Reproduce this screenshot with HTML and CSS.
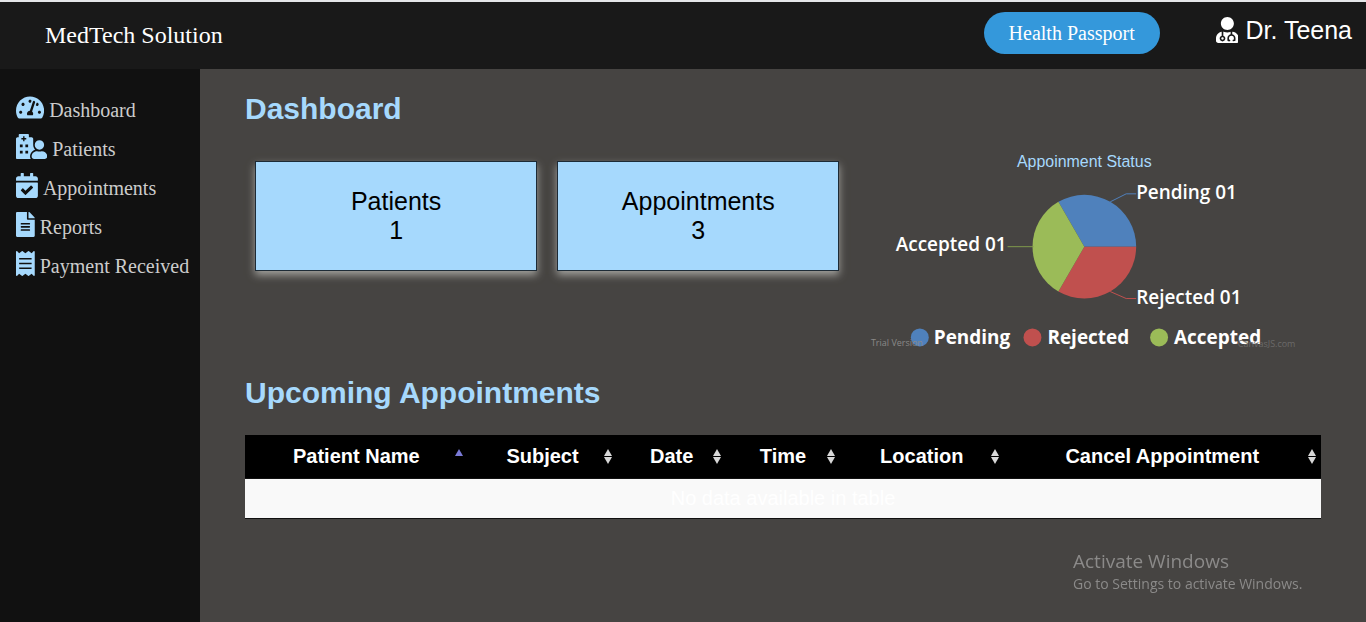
FILE: index.html
```html
<!DOCTYPE html>
<html lang="en">
<head>
<meta charset="utf-8">
<title>MedTech Solution</title>
<link rel="stylesheet" href="styles.css">
</head>
<body>
<header class="topbar">
  <div class="brand">MedTech Solution</div>
  <button class="passport" type="button">Health Passport</button>
  <a class="user" href="#">
    <svg class="user-icon" viewBox="0 0 448 512" aria-hidden="true"><path d="M224 256c70.700 0 128-57.300 128-128S294.700 0 224 0 96 57.300 96 128s57.300 128 128 128zM104 424c0 13.300 10.700 24 24 24s24-10.700 24-24-10.700-24-24-24-24 10.700-24 24zm216-135.400v49c36.500 7.400 64 39.800 64 78.400v41.700c0 7.600-5.400 14.200-12.900 15.700l-32.200 6.400c-4.300.9-8.500-1.900-9.400-6.300l-3.100-15.700c-.9-4.300 1.900-8.600 6.300-9.400l19.300-3.900V416c0-62.800-96-65.100-96 1.900v26.700l19.300 3.900c4.300.9 7.100 5.100 6.300 9.400l-3.100 15.700c-.9 4.300-5.100 7.100-9.400 6.300l-31.200-4.200c-7.900-1.100-13.800-7.800-13.800-15.900V416c0-38.600 27.500-70.900 64-78.400v-45.200c-2.200.7-4.400 1.100-6.600 1.900-18 6.300-37.300 9.800-57.400 9.800s-39.400-3.500-57.400-9.800c-7.400-2.600-14.900-4.200-22.600-5.200v81.600c23.100 6.900 40 28.100 40 53.400 0 30.900-25.100 56-56 56s-56-25.100-56-56c0-25.300 16.900-46.500 40-53.400v-80.400C48.500 301 0 355.800 0 422.400v44.800C0 491.900 20.100 512 44.800 512h358.400c24.700 0 44.800-20.100 44.800-44.800v-44.800c0-72-56.800-130.300-128-133.800z"/></svg>
    <span>Dr. Teena</span>
  </a>
</header>
<div class="layout">
  <nav class="sidebar">
    <a class="nav-link" href="#">
      <svg class="nav-icon" viewBox="0 0 576 512" aria-hidden="true"><path d="M288 32C128.940 32 0 160.940 0 320c0 52.800 14.250 102.260 39.060 144.800 5.610 9.620 16.300 15.200 27.440 15.200h443c11.140 0 21.830-5.580 27.440-15.200C561.750 422.260 576 372.800 576 320c0-159.060-128.940-288-288-288zm0 64c14.710 0 26.580 10.130 30.320 23.650-1.110 2.260-2.640 4.230-3.450 6.670l-9.220 27.670c-5.130 3.490-10.970 6.010-17.640 6.010-17.670 0-32-14.330-32-32S270.330 96 288 96zM96 384c-17.670 0-32-14.330-32-32s14.330-32 32-32 32 14.330 32 32-14.330 32-32 32zm48-160c-17.670 0-32-14.330-32-32s14.330-32 32-32 32 14.330 32 32-14.330 32-32 32zm246.770-72.410l-61.330 184C343.130 347.330 352 364.540 352 384c0 11.720-3.380 22.550-8.880 32H232.880c-5.500-9.450-8.880-20.280-8.880-32 0-33.940 26.500-61.430 59.900-63.590l61.340-184.010c4.170-12.560 17.730-19.450 30.360-15.170 12.570 4.190 19.350 17.790 15.170 30.360zm14.660 57.200l15.520-46.550c3.470-1.290 7.130-2.230 11.050-2.230 17.670 0 32 14.330 32 32s-14.330 32-32 32c-11.380-.01-20.890-6.280-26.570-15.220zM480 384c-17.670 0-32-14.330-32-32s14.330-32 32-32 32 14.330 32 32-14.330 32-32 32z"/></svg>
      <span>Dashboard</span>
    </a>
    <a class="nav-link" href="#">
      <svg class="nav-icon" viewBox="0 0 640 512" aria-hidden="true"><path fill-rule="evenodd" d="M480 320a96 96 0 1 0-96-96 96 96 0 0 0 96 96zm48 32c-31 11-65 11-96 0-66.200 0-112 48-112 108.700 0 28.300 23.200 51.300 52 51.300h216c28.800 0 52-23 52-51.300C640 400 594 352 528 352zM76 0h168c11 0 20 9 20 20v44h56c17 0 32 15 32 32v128c0 37 16 71 42 94-49 18-106 72-106 142 0 20 6 38 16 52H16c-9 0-16-7-16-16V96c0-17 15-32 32-32h24V20c0-11 9-20 20-20zm70 48v36h-36v28h36v36h28v-36h36V84h-36V48zM80 216v56h56v-56zm112 0v56h56v-56zM80 344v56h56v-56zm112 0v56h56v-56z"/></svg>
      <span>Patients</span>
    </a>
    <a class="nav-link" href="#">
      <svg class="nav-icon" viewBox="0 0 448 512" aria-hidden="true"><path d="M436 160H12c-6.627 0-12-5.373-12-12v-36c0-26.510 21.490-48 48-48h48V12c0-6.627 5.373-12 12-12h40c6.627 0 12 5.373 12 12v52h128V12c0-6.627 5.373-12 12-12h40c6.627 0 12 5.373 12 12v52h48c26.510 0 48 21.490 48 48v36c0 6.627-5.373 12-12 12zM12 192h424c6.627 0 12 5.373 12 12v260c0 26.510-21.490 48-48 48H48c-26.510 0-48-21.490-48-48V204c0-6.627 5.373-12 12-12zm333.296 95.947l-28.169-28.398c-4.667-4.705-12.265-4.736-16.970-.068L194.120 364.665l-45.980-46.352c-4.667-4.705-12.266-4.736-16.971-.068l-28.397 28.170c-4.705 4.667-4.736 12.265-.068 16.970l82.601 83.269c4.667 4.705 12.265 4.736 16.970.068l142.953-141.805c4.705-4.667 4.736-12.265.068-16.970z"/></svg>
      <span>Appointments</span>
    </a>
    <a class="nav-link" href="#">
      <svg class="nav-icon" viewBox="0 0 384 512" aria-hidden="true"><path d="M224 136V0H24C10.700 0 0 10.700 0 24v464c0 13.300 10.700 24 24 24h336c13.300 0 24-10.700 24-24V160H248c-13.200 0-24-10.800-24-24zm64 236c0 6.600-5.400 12-12 12H108c-6.600 0-12-5.400-12-12v-8c0-6.600 5.400-12 12-12h168c6.600 0 12 5.400 12 12v8zm0-64c0 6.600-5.400 12-12 12H108c-6.600 0-12-5.400-12-12v-8c0-6.600 5.400-12 12-12h168c6.600 0 12 5.400 12 12v8zm0-72v8c0 6.600-5.400 12-12 12H108c-6.600 0-12-5.400-12-12v-8c0-6.600 5.400-12 12-12h168c6.600 0 12 5.400 12 12zm96-114.100v6.100H256V0h6.100c6.400 0 12.500 2.500 17 7l97.900 98c4.500 4.500 7 10.600 7 16.900z"/></svg>
      <span>Reports</span>
    </a>
    <a class="nav-link" href="#">
      <svg class="nav-icon" viewBox="0 0 384 512" aria-hidden="true"><path d="M358.400 3.200L320 48 265.600 3.200a15.900 15.900 0 0 0-19.200 0L192 48 137.600 3.200a15.900 15.900 0 0 0-19.200 0L64 48 25.600 3.200C15-4.700 0 2.800 0 16v480c0 13.200 15 20.700 25.600 12.800L64 464l54.400 44.800a15.900 15.900 0 0 0 19.200 0L192 464l54.400 44.800a15.900 15.900 0 0 0 19.200 0L320 464l38.400 44.800c10.500 7.900 25.600.4 25.600-12.800V16c0-13.200-15-20.700-25.600-12.800zM320 360c0 4.400-3.600 8-8 8H72c-4.400 0-8-3.600-8-8v-16c0-4.400 3.600-8 8-8h240c4.400 0 8 3.600 8 8v16zm0-96c0 4.400-3.600 8-8 8H72c-4.400 0-8-3.600-8-8v-16c0-4.400 3.600-8 8-8h240c4.400 0 8 3.600 8 8v16zm0-96c0 4.400-3.600 8-8 8H72c-4.400 0-8-3.600-8-8v-16c0-4.400 3.600-8 8-8h240c4.400 0 8 3.600 8 8v16z"/></svg>
      <span>Payment Received</span>
    </a>
  </nav>
  <main class="content">
    <h1 class="heading">Dashboard</h1>
    <section class="summary">
      <div class="card"><span>Patients</span><span>1</span></div>
      <div class="card"><span>Appointments</span><span>3</span></div>
      <svg class="chart" viewBox="0 0 473 212" role="img" aria-label="Appointment status chart">
        <text class="chart-title" x="236" y="27" text-anchor="middle">Appoinment Status</text>
        <path class="pending" d="M236 107H288A52 52 0 0 0 210 62z"/>
        <path class="rejected" d="M236 107H288A52 52 0 0 1 210 152z"/>
        <path class="accepted" d="M236 107L210 62A52 52 0 0 0 210 152z"/>
        <path class="lead lead-pending" d="M262 62L278 54H288"/>
        <path class="lead lead-rejected" d="M262 152L278 159H288"/>
        <path class="lead lead-accepted" d="M159 107H185"/>
        <text class="label" x="288" y="59">Pending 01</text>
        <text class="label" x="288" y="164">Rejected 01</text>
        <text class="label" x="158" y="111" text-anchor="end">Accepted 01</text>
        <circle class="pending" cx="71" cy="198" r="9"/>
        <text class="label legend" x="85" y="205">Pending</text>
        <circle class="rejected" cx="184" cy="198" r="9"/>
        <text class="label legend" x="199" y="205">Rejected</text>
        <circle class="accepted" cx="311" cy="198" r="9"/>
        <text class="label legend" x="326" y="205">Accepted</text>
        <text class="credit" x="22" y="207">Trial Version</text>
        <text class="credit credit-dim" x="390" y="208">CanvasJS.com</text>
      </svg>
    </section>
    <h2 class="heading">Upcoming Appointments</h2>
    <table class="appointments">
      <colgroup><col class="col-name"><col class="col-subject"><col class="col-date"><col class="col-time"><col class="col-location"><col class="col-cancel"></colgroup>
      <thead>
        <tr>
          <th class="sorted">Patient Name</th>
          <th>Subject</th>
          <th>Date</th>
          <th>Time</th>
          <th>Location</th>
          <th>Cancel Appointment</th>
        </tr>
      </thead>
      <tbody>
        <tr><td colspan="6">No data available in table</td></tr>
      </tbody>
    </table>
  </main>
</div>
<aside class="activation">
  <div class="activation-title">Activate Windows</div>
  <div>Go to Settings to activate Windows.</div>
</aside>
</body>
</html>
```

FILE: styles.css
```css
* { box-sizing: border-box; }

body {
  display: flex;
  flex-direction: column;
  min-height: 100vh;
  margin: 0;
  background: #464442;
  font-family: "Liberation Sans", Arial, sans-serif;
}

a { color: inherit; text-decoration: none; }

.topbar {
  display: flex;
  align-items: flex-start;
  padding: 10px 14px 11px 45px;
  border-top: 2px solid #e4e6e8;
  background: #191919;
  color: #fff;
}

.brand {
  flex: 1;
  font: 24px/46px "Liberation Serif", "Times New Roman", serif;
}

.passport {
  height: 42px;
  margin-right: 56px;
  padding: 0 25px;
  border: 0;
  border-radius: 21px;
  background: #3498db;
  color: #fff;
  font: 20px/42px "Liberation Serif", "Times New Roman", serif;
}

.user {
  display: flex;
  align-items: center;
  gap: 7px;
  font-size: 25px;
  line-height: 36px;
}

.user-icon { height: 26px; fill: #fff; }

.layout { display: flex; flex: 1; }

.sidebar {
  display: flex;
  flex: 0 0 200px;
  flex-direction: column;
  gap: 8px;
  padding: 26px 0 26px 16px;
  background: #111;
  color: #ccc;
  font: 20px/31px "Liberation Serif", "Times New Roman", serif;
}

.nav-link {
  display: flex;
  align-items: flex-start;
  gap: 5px;
  white-space: nowrap;
}

.nav-icon { height: 25px; fill: #a6d9fd; }

.content { flex: 1; min-width: 0; padding: 22px 45px; }

.heading {
  margin: 0;
  color: #a6d9fd;
  font-size: 30px;
  line-height: 35px;
}

.summary {
  display: flex;
  align-items: flex-start;
  gap: 20px;
  padding: 14px 0 24px 10px;
}

.card {
  display: flex;
  flex: 281;
  flex-direction: column;
  margin-top: 21px;
  padding: 25px 0;
  border: 1px solid #1d2b36;
  background: #a6d9fd;
  box-shadow: 0 4px 8px rgba(255, 255, 250, 0.5);
  color: #000;
  font-size: 25px;
  line-height: 29px;
  text-align: center;
}

.chart { flex: 473; min-width: 0; margin-left: -10px; overflow: visible; }
.chart-title { fill: #a6d9fd; font-size: 16px; }
.pending { fill: #4f81bc; }
.rejected { fill: #c0504e; }
.accepted { fill: #9bbb58; }
.lead { fill: none; stroke-width: 1; }
.lead-pending { stroke: #4f81bc; }
.lead-rejected { stroke: #c0504e; }
.lead-accepted { stroke: #7f9a4c; }

.label {
  fill: #fff;
  font: 600 19px "Open Sans", "Noto Sans", sans-serif;
}

.legend { font-weight: 700; }

.credit {
  fill: #8a8988;
  font: 9px "Open Sans", "Noto Sans", sans-serif;
}

.credit-dim { fill: #6b6a69; }

.appointments {
  width: 100%;
  margin-top: 25px;
  border-collapse: separate;
  border-spacing: 0;
  border-bottom: 1px solid #111;
  table-layout: fixed;
  color: #fff;
  font-size: 20px;
  line-height: 23px;
  text-align: center;
}

.col-name { width: 20.7%; }
.col-subject { width: 13.9%; }
.col-date { width: 10.1%; }
.col-time { width: 10.6%; }
.col-location { width: 15.2%; }

th {
  position: relative;
  padding: 10px 0;
  border-bottom: 1px solid #111;
  background: #000;
  white-space: nowrap;
}

td { padding: 8px; background: #f9f9f9; }

th::before,
th::after {
  position: absolute;
  right: 5px;
  border: 4px solid transparent;
  content: "";
}

th::before {
  top: 14px;
  border-top: 0;
  border-bottom: 7px solid #d8d8d8;
}

th::after {
  top: 22px;
  border-top: 7px solid #d8d8d8;
  border-bottom: 0;
}

th.sorted::before { border-bottom-color: #7a7ad6; }
th.sorted::after { display: none; }

.activation {
  position: fixed;
  right: 57px;
  bottom: 28px;
  min-width: 236px;
  color: #8b8a89;
  font: 14px/20px "Open Sans", "Noto Sans", sans-serif;
}

.activation-title { font-size: 19px; line-height: 26px; }
```
